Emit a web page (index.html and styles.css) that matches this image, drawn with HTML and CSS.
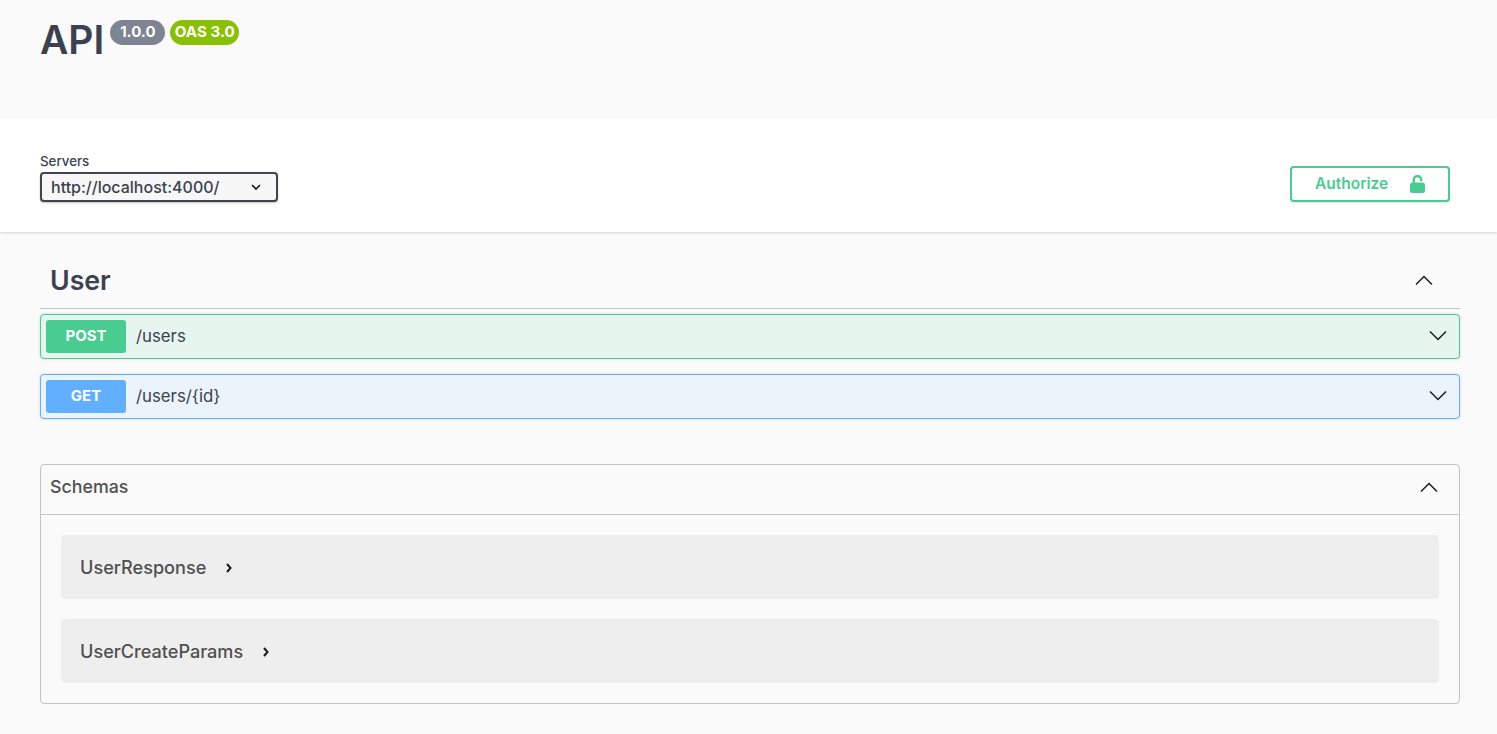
FILE: index.html
```html
<!DOCTYPE html>
<html lang="en">
<head>
<meta charset="utf-8">
<title>API</title>
<link rel="stylesheet" href="styles.css">
</head>
<body>
<header class="info">
  <h1 class="title">API</h1>
  <span class="badge badge-version">1.0.0</span>
  <span class="badge badge-oas">OAS 3.0</span>
</header>
<section class="scheme">
  <div class="servers">
    <span class="servers-label">Servers</span>
    <div class="select">
      <span>http://localhost:4000/</span>
      <svg class="select-arrow" width="12" height="8" viewBox="0 0 12 8"><path d="M2 2l4 4 4-4" fill="none" stroke="#1b1b1b" stroke-width="1.6"/></svg>
    </div>
  </div>
  <button class="authorize">
    <span>Authorize</span>
    <svg width="15" height="18" viewBox="0 0 15 18"><path d="M3.800 9V4.700a3.700 3.700 0 0 1 7.400 0V6" fill="none" stroke="#49cc90" stroke-width="2.400"/><rect x="0" y="7.500" width="15" height="10.500" rx="2.500" fill="#49cc90"/></svg>
  </button>
</section>
<main class="content">
  <div class="tag">
    <h2>User</h2>
    <svg class="chev" width="20" height="20" viewBox="0 0 20 20"><path d="M2 14.500l8-8 8 8" fill="none" stroke="#1b1b1b" stroke-width="1.500"/></svg>
  </div>
  <div class="op op-post">
    <span class="method">POST</span>
    <span class="path">/users</span>
    <svg class="chev" width="20" height="20" viewBox="0 0 20 20"><path d="M2 5.500l8 8 8-8" fill="none" stroke="#1b1b1b" stroke-width="1.500"/></svg>
  </div>
  <div class="op op-get">
    <span class="method">GET</span>
    <span class="path">/users/{id}</span>
    <svg class="chev" width="20" height="20" viewBox="0 0 20 20"><path d="M2 5.500l8 8 8-8" fill="none" stroke="#1b1b1b" stroke-width="1.500"/></svg>
  </div>
  <section class="models">
    <div class="models-head">
      <h4>Schemas</h4>
      <svg class="chev" width="20" height="20" viewBox="0 0 20 20"><path d="M2 14.500l8-8 8 8" fill="none" stroke="#1b1b1b" stroke-width="1.500"/></svg>
    </div>
    <div class="models-body">
      <div class="model">
        <span>UserResponse</span>
        <svg class="model-arrow" width="8" height="10" viewBox="0 0 8 10"><path d="M2 1l3.500 4L2 9" fill="none" stroke="#1b1b1b" stroke-width="2"/></svg>
      </div>
      <div class="model">
        <span>UserCreateParams</span>
        <svg class="model-arrow" width="8" height="10" viewBox="0 0 8 10"><path d="M2 1l3.500 4L2 9" fill="none" stroke="#1b1b1b" stroke-width="2"/></svg>
      </div>
    </div>
  </section>
</main>
</body>
</html>
```
FILE: styles.css
```css
* { box-sizing: border-box; }
html, body { height: 734px; overflow: hidden; }
body {
  margin: 0;
  background: #fafafa;
  color: #3b4151;
  font-family: Inter, "Liberation Sans", sans-serif;
}
.info {
  height: 118px;
  padding: 20px 40px 0;
  display: flex;
  align-items: flex-start;
}
.title {
  margin: 0;
  font-size: 39px;
  line-height: 40px;
  font-weight: 600;
  color: #3b4151;
}
.badge {
  height: 25px;
  border-radius: 13px;
  color: #fff;
  font-weight: 700;
  line-height: 24px;
  text-align: center;
}
.badge-version { background: #7d8492; width: 55px; margin-left: 6px; font-size: 15px; }
.badge-oas { background: #89bf04; width: 69px; margin-left: 5px; font-size: 15.200px; }
.scheme {
  height: 114px;
  background: #fff;
  box-shadow: 0 1px 2px rgba(0, 0, 0, 0.15);
  padding: 36px 47px 0 40px;
  display: flex;
  justify-content: space-between;
  align-items: flex-start;
}
.servers-label {
  display: block;
  font-size: 13.300px;
  font-weight: 500;
  line-height: 15px;
  margin-bottom: 3px;
}
.select {
  width: 238px;
  height: 30px;
  border: 2px solid #41444e;
  border-radius: 4px;
  background: #f7f7f7;
  box-shadow: 0 1px 2px rgba(0, 0, 0, 0.25);
  padding: 0 14px 1px 9px;
  display: flex;
  justify-content: space-between;
  align-items: center;
  font-size: 16px;
  font-weight: 500;
}
.authorize {
  width: 160px;
  height: 36px;
  margin: 12px 0 0;
  padding: 0 23px 1px 23px;
  background: #fff;
  border: 2px solid #49cc90;
  border-radius: 4px;
  box-shadow: 0 1px 2px rgba(0, 0, 0, 0.1);
  color: #49cc90;
  font-family: inherit;
  font-size: 15.500px;
  font-weight: 600;
  display: flex;
  justify-content: space-between;
  align-items: center;
}
.content { padding: 0 37px 0 40px; }
.tag {
  height: 46px;
  margin-top: 31px;
  padding: 0 26px 12px 10px;
  display: flex;
  justify-content: space-between;
  align-items: center;
  border-bottom: 1px solid #c4c5ca;
}
.tag h2 {
  margin: 0;
  font-size: 26.700px;
  font-weight: 600;
}
.op {
  height: 45px;
  margin-top: 5px;
  padding: 0 11px 2px 5px;
  border: 1px solid;
  border-radius: 4px;
  box-shadow: 0 0 3px rgba(0, 0, 0, 0.15);
  display: flex;
  align-items: center;
}
.op + .op { margin-top: 15px; }
.op-post { background: #e7f5ef; border-color: #49cc90; }
.op-get { background: #ebf3fb; border-color: #61affe; }
.method {
  width: 80px;
  height: 33px;
  margin-top: 2px;
  border-radius: 3px;
  color: #fff;
  font-size: 15px;
  font-weight: 700;
  line-height: 31px;
  text-align: center;
}
.op-post .method { background: #49cc90; }
.op-get .method { background: #61affe; }
.path {
  flex: 1;
  margin-left: 10px;
  font-size: 16.800px;
  color: #3b4151;
}
.models {
  margin-top: 45px;
  height: 240px;
  border: 1px solid #c4c4c4;
  border-radius: 4px;
}
.models-head {
  height: 50px;
  padding: 0 20px 6px 9px;
  display: flex;
  justify-content: space-between;
  align-items: center;
  border-bottom: 1px solid #c4c4c4;
}
.models-head h4 {
  margin: 0;
  font-size: 17.800px;
  font-weight: 500;
  color: #505050;
}
.models-body {
  padding: 20px;
  display: flex;
  flex-direction: column;
  gap: 20px;
}
.model {
  height: 64px;
  padding-left: 19px;
  background: #eee;
  border-radius: 4px;
  display: flex;
  align-items: center;
  gap: 19px;
  font-size: 18.100px;
  font-weight: 500;
  color: #505050;
}
.model-arrow { margin-top: 2px; }
```
